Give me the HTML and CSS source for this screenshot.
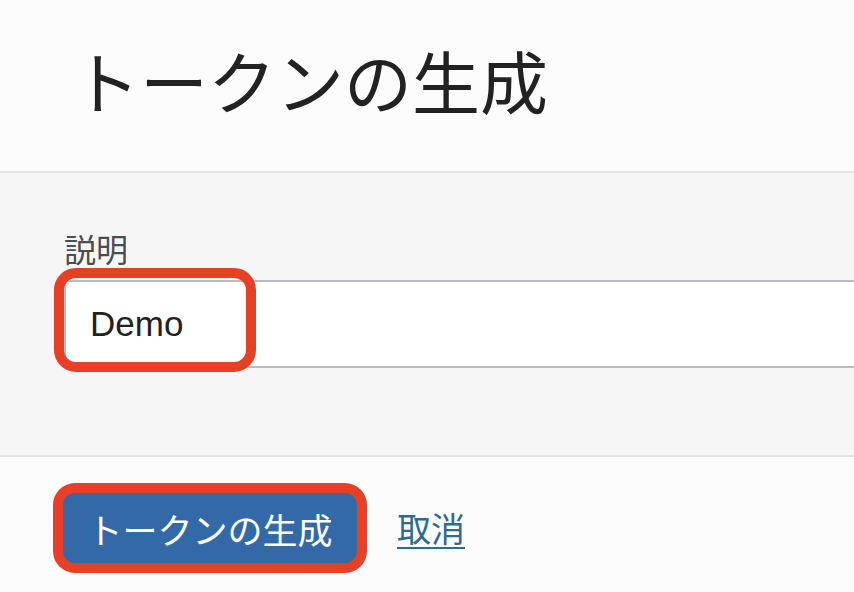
FILE: index.html
```html
<!DOCTYPE html>
<html lang="ja">
<head>
<meta charset="utf-8">
<title>トークンの生成</title>
<link rel="stylesheet" href="styles.css">
</head>
<body>
<header class="page-header">
  <h1 class="page-title">トークンの生成</h1>
</header>
<section class="form-body">
  <label class="field-label" for="desc">説明</label>
  <div class="field-wrap">
    <input id="desc" class="field-input" type="text" value="Demo">
    <span class="highlight highlight-input"></span>
  </div>
</section>
<footer class="form-footer">
  <button class="btn-primary" type="button">トークンの生成</button>
  <a class="cancel-link" href="#">取消</a>
</footer>
</body>
</html>
```

FILE: styles.css
```css
html, body {
  margin: 0;
  padding: 0;
  background: #fcfcfc;
  height: 100%;
  overflow: hidden;
}

body {
  font-family: "Noto Sans CJK JP", "Liberation Sans", sans-serif;
  color: #222;
}

.page-header {
  box-sizing: border-box;
  height: 173px;
  padding: 46px 0 0 72px;
  background: #fcfcfc;
  border-bottom: 2px solid #e3e3e3;
}

.page-title {
  margin: 0;
  font-size: 68px;
  font-weight: 400;
  line-height: 1;
  color: #222;
}

.form-body {
  background: #f6f6f6;
  padding: 59px 0 87px 64px;
  border-bottom: 2px solid #e3e3e3;
}

.field-label {
  display: block;
  font-size: 32px;
  line-height: 1;
  color: #4d4d4d;
  margin-bottom: 16px;
}

.field-wrap {
  position: relative;
}

.field-input {
  display: block;
  box-sizing: border-box;
  width: 820px;
  height: 88px;
  margin: 0;
  padding: 0 24px;
  border: 2px solid #b9bcc1;
  border-right: none;
  border-radius: 0;
  background: #fff;
  font-family: "Liberation Sans", Arial, sans-serif;
  font-size: 35px;
  color: #222;
  outline: none;
}

.highlight {
  position: absolute;
  box-sizing: border-box;
  border: 10px solid #e64027;
  pointer-events: none;
}

.highlight-input {
  left: -10px;
  top: -12px;
  width: 202px;
  height: 104px;
  border-radius: 22px;
}

.form-footer {
  display: flex;
  align-items: center;
  gap: 40px;
  padding: 36px 0 0 63px;
  background: #fcfcfc;
}

.btn-primary {
  box-sizing: border-box;
  width: 294px;
  height: 70px;
  padding: 0;
  border: none;
  border-radius: 12px;
  background: #3469a8;
  color: #fff;
  font-family: "Noto Sans CJK JP", sans-serif;
  font-size: 35px;
  line-height: 1;
  box-shadow: 0 0 0 10px #e64027;
}

.cancel-link {
  font-size: 34px;
  line-height: 1;
  color: #2f6b8f;
  text-decoration: underline;
  text-decoration-thickness: 2px;
  text-underline-offset: 5px;
}
```
